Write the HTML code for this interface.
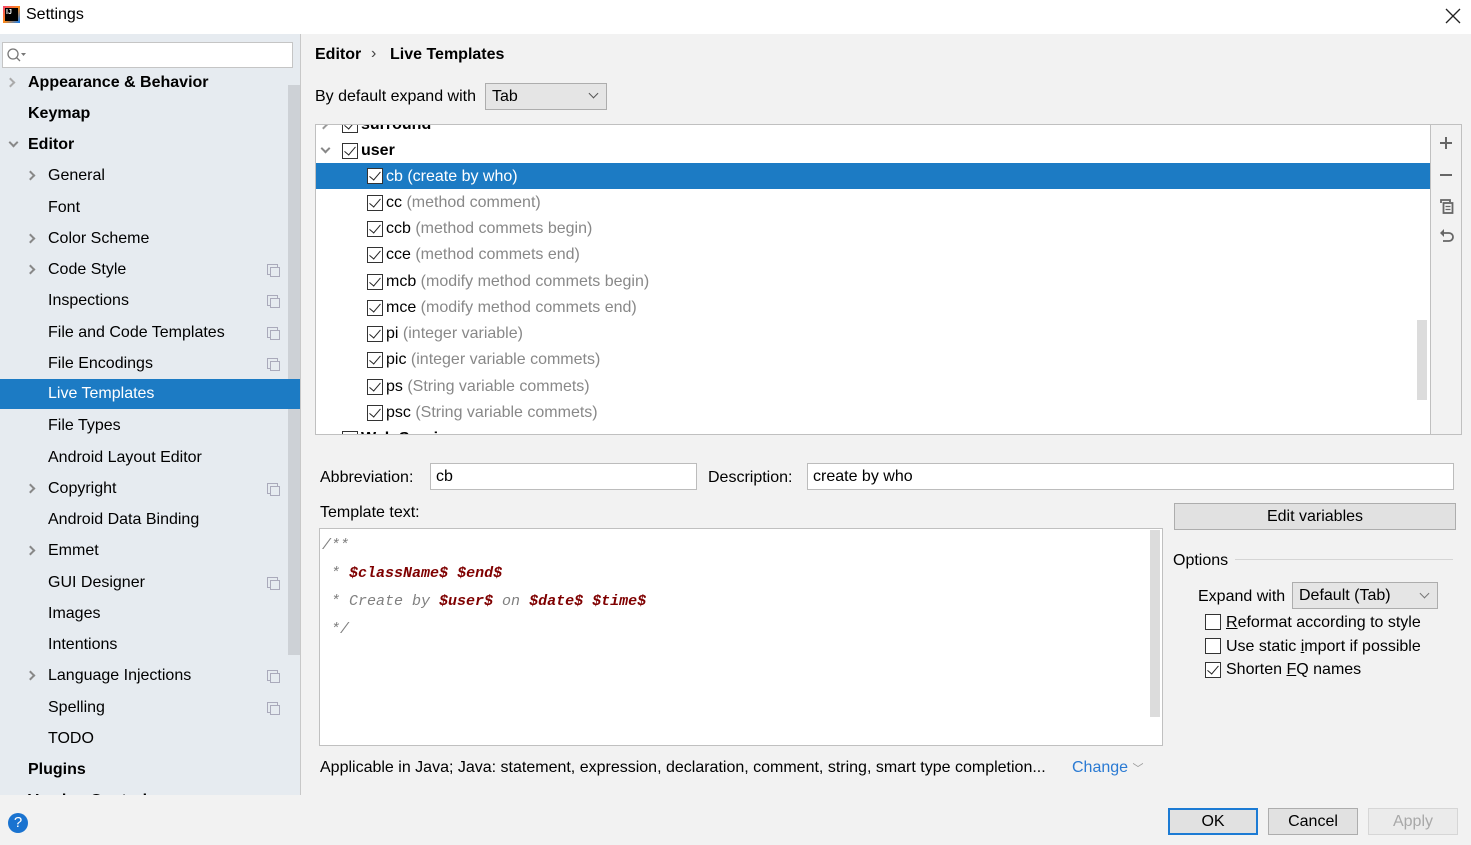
<!DOCTYPE html>
<html><head><meta charset="utf-8"><style>
*{margin:0;padding:0;box-sizing:border-box}
body{width:1471px;height:845px;overflow:hidden;background:#f2f2f2;font-family:"Liberation Sans","Noto Sans CJK SC",sans-serif;font-size:16px;color:#000;position:relative}
.a{position:absolute;white-space:nowrap}
.side{position:absolute;left:0;top:34px;width:301px;height:761px;background:#e6ebf0;border-right:1px solid #c8c8c8;overflow:hidden}
.row{position:absolute;left:0;width:288px;height:31px;line-height:31px}
.b{font-weight:bold}
.arr{position:absolute;width:7px;height:7px;border-right:2px solid #888;border-bottom:2px solid #888}
.ri{transform:rotate(-45deg)}
.dn{transform:rotate(45deg)}
.cp{position:absolute;left:267px;width:11px;height:11px;border:1px solid #aab;background:#e6ebf0}
.cp:before{content:"";position:absolute;left:2px;top:2px;width:8px;height:8px;border:1px solid #aab;background:#e6ebf0}
.cb{position:absolute;width:16px;height:16px;border:1px solid #333;background:#fff}
.cb.c:after{content:"";position:absolute;left:4px;top:0px;width:5px;height:10px;border-right:1.5px solid #222;border-bottom:1.5px solid #222;transform:rotate(40deg)}
.gr{color:#888}
.field{position:absolute;background:#fff;border:1px solid #bcbcbc;height:27px;line-height:25px;padding-left:5px}
.btn{position:absolute;height:27px;border:1px solid #adadad;background:#e1e1e1;text-align:center;line-height:25px}
.code{font-family:"Liberation Mono",monospace;font-style:italic;font-size:15px}
.v{color:#7f0000;font-weight:bold}
</style></head><body>
<div class="a" style="left:0;top:0;width:1471px;height:34px;background:#fff"></div>
<div class="a" style="left:3px;top:6px;width:17px;height:17px;background:linear-gradient(135deg,#f7406c,#fd8a19,#087cfa)"></div>
<div class="a" style="left:5px;top:8px;width:13px;height:13px;background:#000;color:#fff;font-size:7px;font-weight:bold;line-height:9px;padding-left:1px">IJ</div>
<div class="a" style="left:26px;top:6px;font-size:16px">Settings</div>
<svg class="a" style="left:1445px;top:8px" width="16" height="16"><path d="M1 1L15 15M15 1L1 15" stroke="#222" stroke-width="1.3"/></svg>

<div class="side">
<div class="a" style="left:2px;top:8px;width:291px;height:26px;background:#fff;border:1px solid #c5c5c5"></div>
<svg class="a" style="left:6px;top:13px" width="22" height="16"><circle cx="7" cy="7" r="5" fill="none" stroke="#777" stroke-width="1.3"/><line x1="10.5" y1="10.5" x2="14" y2="14" stroke="#777" stroke-width="1.3"/><path d="M15 6h5l-2.5 3z" fill="#777"/></svg>
<div class="a" style="left:288px;top:51px;width:12px;height:570px;background:#cdd1d6"></div>
<div class="row b" style="top:33px"><span class="arr ri" style="left:7px;top:12px;border-color:#aaa"></span><span style="position:absolute;left:28px">Appearance &amp; Behavior</span></div>
<div class="row b" style="top:64px"><span style="position:absolute;left:28px">Keymap</span></div>
<div class="row b" style="top:95px"><span class="arr dn" style="left:10px;top:10px"></span><span style="position:absolute;left:28px">Editor</span></div>
<div class="row" style="top:126px"><span class="arr ri" style="left:27px;top:12px"></span><span style="position:absolute;left:48px">General</span></div>
<div class="row" style="top:158px"><span style="position:absolute;left:48px">Font</span></div>
<div class="row" style="top:189px"><span class="arr ri" style="left:27px;top:12px"></span><span style="position:absolute;left:48px">Color Scheme</span></div>
<div class="row" style="top:220px"><span class="arr ri" style="left:27px;top:12px"></span><span style="position:absolute;left:48px">Code Style</span><span class="cp" style="top:10px"></span></div>
<div class="row" style="top:251px"><span style="position:absolute;left:48px">Inspections</span><span class="cp" style="top:10px"></span></div>
<div class="row" style="top:283px"><span style="position:absolute;left:48px">File and Code Templates</span><span class="cp" style="top:10px"></span></div>
<div class="row" style="top:314px"><span style="position:absolute;left:48px">File Encodings</span><span class="cp" style="top:10px"></span></div>
<div class="row" style="top:345px;width:301px;height:30px;background:#1c7bc4;color:#fff;line-height:30px"><span style="position:absolute;left:48px">Live Templates</span></div>
<div class="row" style="top:376px"><span style="position:absolute;left:48px">File Types</span></div>
<div class="row" style="top:408px"><span style="position:absolute;left:48px">Android Layout Editor</span></div>
<div class="row" style="top:439px"><span class="arr ri" style="left:27px;top:12px"></span><span style="position:absolute;left:48px">Copyright</span><span class="cp" style="top:10px"></span></div>
<div class="row" style="top:470px"><span style="position:absolute;left:48px">Android Data Binding</span></div>
<div class="row" style="top:501px"><span class="arr ri" style="left:27px;top:12px"></span><span style="position:absolute;left:48px">Emmet</span></div>
<div class="row" style="top:533px"><span style="position:absolute;left:48px">GUI Designer</span><span class="cp" style="top:10px"></span></div>
<div class="row" style="top:564px"><span style="position:absolute;left:48px">Images</span></div>
<div class="row" style="top:595px"><span style="position:absolute;left:48px">Intentions</span></div>
<div class="row" style="top:626px"><span class="arr ri" style="left:27px;top:12px"></span><span style="position:absolute;left:48px">Language Injections</span><span class="cp" style="top:10px"></span></div>
<div class="row" style="top:658px"><span style="position:absolute;left:48px">Spelling</span><span class="cp" style="top:10px"></span></div>
<div class="row" style="top:689px"><span style="position:absolute;left:48px">TODO</span></div>
<div class="row b" style="top:720px"><span style="position:absolute;left:28px">Plugins</span></div>
<div class="row b" style="top:751px"><span style="position:absolute;left:28px">Version Control</span></div>
</div>
<div class="a" style="left:8px;top:813px;width:20px;height:20px;border-radius:50%;background:#1a73d0;color:#fff;text-align:center;line-height:20px;font-size:15px">?</div>

<div class="a b" style="left:315px;top:46px">Editor</div>
<div class="a" style="left:371px;top:45px;color:#444">›</div>
<div class="a b" style="left:390px;top:46px">Live Templates</div>
<div class="a" style="left:315px;top:88px">By default expand with</div>
<div class="a" style="left:485px;top:83px;width:122px;height:27px;background:#e5e5e5;border:1px solid #adadad;padding-left:6px;line-height:26px">Tab<span class="arr dn" style="right:9px;top:6px;width:7px;height:7px;border-width:1.3px;border-color:#555"></span></div>

<div class="a" style="left:315px;top:124px;width:1147px;height:311px;background:#fff;border:1px solid #c0c0c0;overflow:hidden">
 <div class="a" style="left:1114px;top:0;width:32px;height:311px;background:#f2f2f2;border-left:1px solid #c0c0c0"></div>
 <div class="a" style="left:1101px;top:195px;width:10px;height:80px;background:#dcdcdc"></div>
 <div class="a" style="left:0;top:-13px;height:26px;line-height:26px;width:1114px"><span class="arr ri" style="left:4px;top:9px;border-color:#999"></span><span class="cb c" style="left:26px;top:5px"></span><span class="b" style="position:absolute;left:45px">surround</span></div>
 <div class="a" style="left:0;top:13px;height:26px;line-height:26px;width:1114px"><span class="arr dn" style="left:6px;top:7px"></span><span class="cb c" style="left:26px;top:5px"></span><span class="b" style="position:absolute;left:45px">user</span></div>
 <div class="a" style="left:0;top:38px;height:26px;line-height:27px;width:1114px;background:#1c7bc4;color:#fff"><span class="cb c" style="left:51px;top:5px"></span><span style="position:absolute;left:70px">cb (create by who)</span></div>
 <div class="a" style="left:0;top:65px;height:26px;line-height:26px"><span class="cb c" style="left:51px;top:5px"></span><span style="position:absolute;left:70px">cc <span class="gr">(method comment)</span></span></div>
 <div class="a" style="left:0;top:91px;height:26px;line-height:26px"><span class="cb c" style="left:51px;top:5px"></span><span style="position:absolute;left:70px">ccb <span class="gr">(method commets begin)</span></span></div>
 <div class="a" style="left:0;top:117px;height:26px;line-height:26px"><span class="cb c" style="left:51px;top:5px"></span><span style="position:absolute;left:70px">cce <span class="gr">(method commets end)</span></span></div>
 <div class="a" style="left:0;top:144px;height:26px;line-height:26px"><span class="cb c" style="left:51px;top:5px"></span><span style="position:absolute;left:70px">mcb <span class="gr">(modify method commets begin)</span></span></div>
 <div class="a" style="left:0;top:170px;height:26px;line-height:26px"><span class="cb c" style="left:51px;top:5px"></span><span style="position:absolute;left:70px">mce <span class="gr">(modify method commets end)</span></span></div>
 <div class="a" style="left:0;top:196px;height:26px;line-height:26px"><span class="cb c" style="left:51px;top:5px"></span><span style="position:absolute;left:70px">pi <span class="gr">(integer variable)</span></span></div>
 <div class="a" style="left:0;top:222px;height:26px;line-height:26px"><span class="cb c" style="left:51px;top:5px"></span><span style="position:absolute;left:70px">pic <span class="gr">(integer variable commets)</span></span></div>
 <div class="a" style="left:0;top:249px;height:26px;line-height:26px"><span class="cb c" style="left:51px;top:5px"></span><span style="position:absolute;left:70px">ps <span class="gr">(String variable commets)</span></span></div>
 <div class="a" style="left:0;top:275px;height:26px;line-height:26px"><span class="cb c" style="left:51px;top:5px"></span><span style="position:absolute;left:70px">psc <span class="gr">(String variable commets)</span></span></div>
 <div class="a" style="left:0;top:301px;height:26px;line-height:26px"><span class="cb c" style="left:26px;top:5px"></span><span class="b" style="position:absolute;left:45px">Web Services</span></div>
 <svg class="a" style="left:1120px;top:8px" width="22" height="110"><path d="M4 10h12M10 4v12" stroke="#666" stroke-width="2"/><path d="M4 42h12" stroke="#666" stroke-width="2"/><path d="M5 70v-3h9v2" fill="none" stroke="#666" stroke-width="1.8"/><rect x="7.5" y="70" width="9" height="10" fill="none" stroke="#666" stroke-width="1.8"/><path d="M9.5 73.5h5M9.5 76.5h5" stroke="#666" stroke-width="1.2"/><path d="M8 100h5a4 4 0 0 1 0 8H7" fill="none" stroke="#666" stroke-width="1.8"/><path d="M4 100l4-4v8z" fill="#666"/></svg>
</div>

<div class="a" style="left:320px;top:469px">Abbreviation:</div>
<div class="field" style="left:430px;top:463px;width:267px">cb</div>
<div class="a" style="left:708px;top:469px">Description:</div>
<div class="field" style="left:807px;top:463px;width:647px">create by who</div>
<div class="a" style="left:320px;top:504px">Template text:</div>
<div class="a" style="left:319px;top:528px;width:844px;height:218px;background:#fff;border:1px solid #c0c0c0"></div>
<div class="a" style="left:1150px;top:530px;width:10px;height:187px;background:#dcdcdc"></div>
<div class="a code" style="left:322px;top:532px;line-height:28px;color:#808080">/**<br>&nbsp;* <span class="v">$className$</span> <span class="v">$end$</span><br>&nbsp;* Create by <span class="v">$user$</span> on <span class="v">$date$</span> <span class="v">$time$</span><br>&nbsp;*/</div>

<div class="btn" style="left:1174px;top:503px;width:282px">Edit variables</div>
<div class="a" style="left:1173px;top:552px">Options</div>
<div class="a" style="left:1235px;top:559px;width:218px;height:1px;background:#d5d5d5"></div>
<div class="a" style="left:1198px;top:588px">Expand with</div>
<div class="a" style="left:1292px;top:582px;width:146px;height:27px;background:#e5e5e5;border:1px solid #adadad;padding-left:6px;line-height:26px">Default (Tab)<span class="arr dn" style="right:9px;top:7px;width:7px;height:7px;border-width:1.2px;border-color:#777"></span></div>
<span class="cb" style="left:1205px;top:614px"></span><div class="a" style="left:1226px;top:614px"><u>R</u>eformat according to style</div>
<span class="cb" style="left:1205px;top:638px"></span><div class="a" style="left:1226px;top:638px">Use static <u>i</u>mport if possible</div>
<span class="cb c" style="left:1205px;top:662px"></span><div class="a" style="left:1226px;top:661px">Shorten <u>F</u>Q names</div>

<div class="a" style="left:320px;top:759px">Applicable in Java; Java: statement, expression, declaration, comment, string, smart type completion...</div>
<div class="a" style="left:1072px;top:759px;color:#2a7ad3">Change <span style="font-size:11px;color:#999">﹀</span></div>

<div class="btn" style="left:1168px;top:808px;width:90px;border:2px solid #1c7bd4;line-height:23px">OK</div>
<div class="btn" style="left:1268px;top:808px;width:90px">Cancel</div>
<div class="btn" style="left:1368px;top:808px;width:90px;color:#a8a8a8;background:#ebebeb;border-color:#d6d6d6">Apply</div>
</body></html>
